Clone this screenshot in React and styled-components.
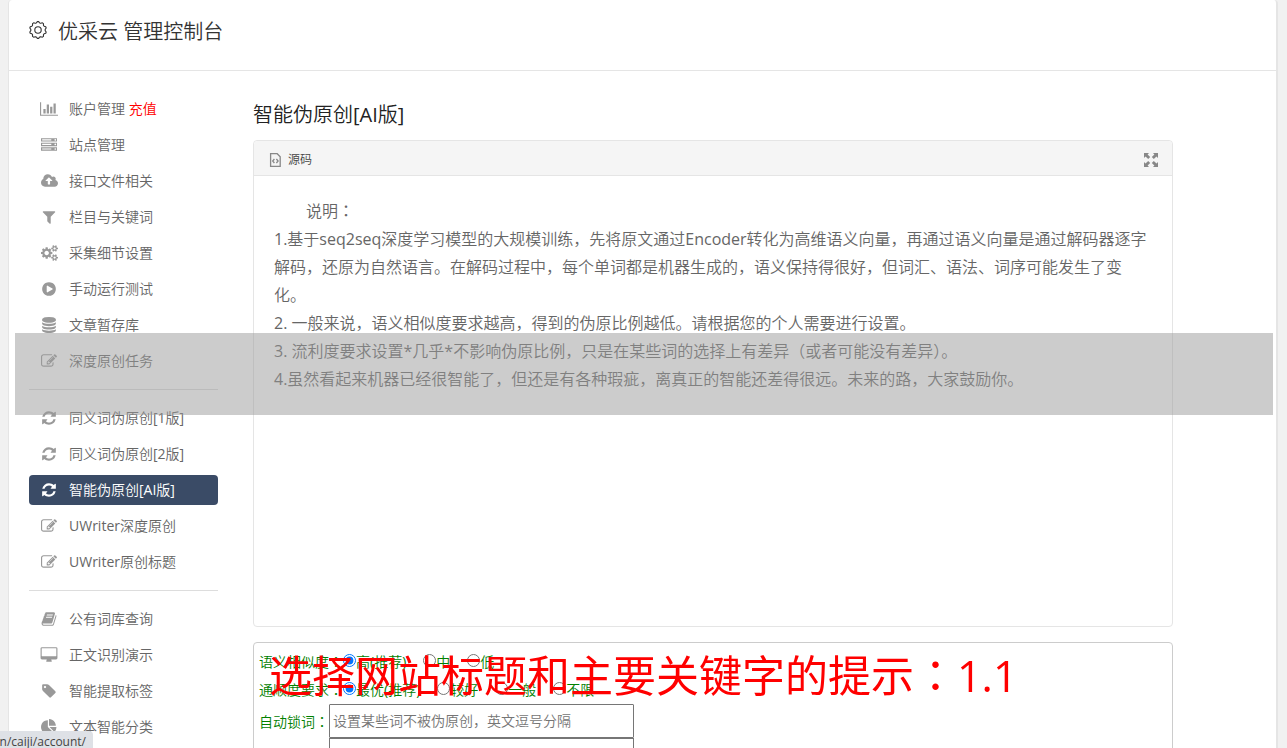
import React from "react";
import styled, { createGlobalStyle } from "styled-components";

const FONT = `"Open Sans", "Noto Sans CJK SC DemiLight", "Noto Sans CJK SC", sans-serif`;

const GlobalStyle = createGlobalStyle`
  *, *::before, *::after { box-sizing: border-box; }
  body {
    margin: 0;
    background: #f1f1f1;
    font-family: ${FONT};
    font-size: 14px;
    font-weight: 400;
    color: #666;
  }
  button, input, textarea { font: inherit; }
`;

const Page = styled.div`
  height: 100vh;
  overflow: hidden;
  padding: 0 9px 0 8px;
`;

const Card = styled.div`
  min-height: 100vh;
  background: #fff;
  border-left: 1px solid #e5e5e5;
  border-right: 2px solid #e5e5e5;
  border-radius: 4px 4px 0 0;
`;

const Header = styled.header`
  display: flex;
  align-items: center;
  gap: 11px;
  height: 71px;
  padding: 0 20px 10px;
  border-bottom: 1px solid #e5e5e5;
  color: #333;
`;

const HeaderTitle = styled.h1`
  margin: 0;
  padding-top: 3px;
  font-size: 20px;
  line-height: 28px;
  font-weight: 400;
`;

const Columns = styled.div`
  display: flex;
  align-items: flex-start;
  gap: 35px;
  padding: 23px 103px 0 20px;
`;

const Sidebar = styled.nav`
  display: flex;
  flex-direction: column;
  flex: none;
  gap: 6px;
  width: 189px;
`;

const NavItem = styled.a`
  display: flex;
  align-items: center;
  gap: 10px;
  height: 30px;
  padding: 0 10px;
  border-radius: 4px;
  line-height: 20px;
  text-decoration: none;
  white-space: pre;
  color: ${(p) => (p.$active ? "#fff" : "#666")};
  background: ${(p) => (p.$active ? "#3a4b66" : "transparent")};
`;

const NavIcon = styled.span`
  display: flex;
  justify-content: center;
  flex: none;
  width: 20px;
  color: ${(p) => (p.$active ? "#fff" : "#999")};
`;

const Recharge = styled.span`
  color: #f00;
`;

const Divider = styled.hr`
  width: 100%;
  margin: 7px 0;
  border: 0;
  border-top: 1px solid #ddd;
`;

const Main = styled.main`
  flex: 1;
  min-width: 0;
`;

const Title = styled.h2`
  margin: 6px 0 10px;
  font-size: 20px;
  line-height: 30px;
  font-weight: 400;
  color: #222;
`;

const Panel = styled.section`
  min-height: 487px;
  border: 1px solid #e5e5e5;
  border-radius: 4px;
`;

const PanelHead = styled.div`
  display: flex;
  align-items: center;
  justify-content: space-between;
  height: 35px;
  padding: 3px 14px 0 15px;
  background: #f5f5f5;
  border-bottom: 1px solid #e5e5e5;
  border-radius: 4px 4px 0 0;
`;

const ToolButton = styled.button`
  display: flex;
  align-items: center;
  gap: 6px;
  padding: 0;
  border: 0;
  background: none;
  color: #444;
  font-size: 12px;
  line-height: 16px;
  cursor: pointer;
`;

const Article = styled.div`
  padding: 20px;
  font-size: 16px;
  line-height: 28px;
`;

const Paragraph = styled.p`
  margin: 0;
  text-indent: ${(p) => (p.$indent ? "2em" : "0")};
`;

const Form = styled.form`
  margin-top: 15px;
  min-height: 180px;
  padding: 4px 5px;
  border: 1px solid #ccc;
  border-radius: 4px;
  color: #008000;
`;

const RadioRow = styled.fieldset`
  display: flex;
  align-items: center;
  height: 28px;
  margin: 0;
  padding: 0;
  border: 0;
`;

const RowCaption = styled.span`
  flex: none;
`;

const Options = styled.div`
  display: flex;
  gap: 17px;
`;

const Option = styled.label`
  display: flex;
  align-items: center;
`;

const Radio = styled.input`
  width: 13px;
  height: 13px;
  margin: 0 0 2px;
`;

const FieldRow = styled.div`
  display: flex;
  align-items: center;
  margin-top: 1px;
`;

const FieldLabel = styled.label`
  flex: none;
  width: 70px;
`;

const TextInput = styled.input`
  width: 305px;
  height: 34px;
  padding: 0 3px 2px;
  border: 1px solid #767676;
  border-radius: 1px;
  outline: 0;
  &::placeholder { color: #757575; opacity: 1; }
`;

const TextArea = styled.textarea`
  width: 305px;
  height: 100px;
  margin-left: 70px;
  border: 1px solid #767676;
  resize: none;
`;

const GreyBand = styled.div`
  position: fixed;
  top: 333px;
  left: 15px;
  right: 14px;
  height: 82px;
  background: rgba(153, 153, 153, 0.5);
  pointer-events: none;
`;

const Caption = styled.div`
  position: fixed;
  left: 269px;
  top: 643px;
  font-family: "Open Sans", "Noto Sans CJK SC", sans-serif;
  font-size: 43px;
  line-height: 60px;
  color: #f00;
  white-space: nowrap;
  pointer-events: none;
`;

const CenteredMark = styled.span`
  font-family: "Noto Sans CJK JP", sans-serif;
`;

const StatusBar = styled.div`
  position: fixed;
  left: 0;
  bottom: 0;
  display: flex;
  justify-content: flex-end;
  width: 93px;
  height: 17px;
  padding: 3px 7px 0 0;
  overflow: hidden;
  background: #dee1e6;
  border-radius: 0 4px 0 0;
  font-size: 12px;
  line-height: 16px;
  color: #444;
  white-space: nowrap;
`;

const glyphs = {
  chart: [2048, "M640 896v512h-256v-512h256zm384-512v1024h-256v-1024h256zm1024 1152v128h-2048v-1536h128v1408h1920zm-640-896v768h-256v-768h256zm384-384v1152h-256v-1152h256z"],
  server: [1792, "M128 1408h1024v-128h-1024v128zm0-512h1024v-128h-1024v128zm1568 448q0-40-28-68t-68-28-68 28-28 68 28 68 68 28 68-28 28-68zm-1568-960h1024v-128h-1024v128zm1568 448q0-40-28-68t-68-28-68 28-28 68 28 68 68 28 68-28 28-68zm0-512q0-40-28-68t-68-28-68 28-28 68 28 68 68 28 68-28 28-68zm96 832v384h-1792v-384h1792zm0-512v384h-1792v-384h1792zm0-512v384h-1792v-384h1792z"],
  upload: [1920, "M1280 864q0-14-9-23l-352-352q-9-9-23-9t-23 9l-351 351q-10 12-10 24 0 14 9 23t23 9h224v352q0 13 9.5 22.5t22.5 9.5h192q13 0 22.5-9.5t9.5-22.5v-352h224q13 0 22.5-9.5t9.5-22.5zm640 288q0 159-112.5 271.5t-271.5 112.5h-1088q-185 0-316.5-131.5t-131.5-316.5q0-130 70-240t188-165q-2-30-2-43 0-212 150-362t362-150q156 0 285.5 87t188.5 231q71-62 166-62 106 0 181 75t75 181q0 76-41 138 130 31 213.5 135.5t83.5 238.5z"],
  filter: [1792, "M1595 295q17 41-14 70l-493 493v742q0 42-39 59-13 5-25 5-27 0-45-19l-256-256q-19-19-19-45v-486l-493-493q-31-29-14-70 17-39 59-39h1280q42 0 59 39z"],
  cogs: [1920, "M896 896q0-106-75-181t-181-75-181 75-75 181 75 181 181 75 181-75 75-181zm768 512q0-52-38-90t-90-38-90 38-38 90q0 53 37.5 90.5t90.5 37.5 90.5-37.5 37.5-90.5zm0-1024q0-52-38-90t-90-38-90 38-38 90q0 53 37.5 90.5t90.5 37.5 90.5-37.5 37.5-90.5zm-384 421v185q0 10-7 19.5t-16 10.5l-155 24q-11 35-32 76 34 48 90 115 7 11 7 20 0 12-7 19-23 30-82.5 89.5t-78.5 59.5q-11 0-21-7l-115-90q-37 19-77 31-11 108-23 155-7 24-30 24h-186q-11 0-20-7.5t-10-17.5l-23-153q-34-10-75-31l-118 89q-7 7-20 7-11 0-21-8-144-133-144-160 0-9 7-19 10-14 41-53t47-61q-23-44-35-82l-152-24q-10-1-17-9.5t-7-19.5v-185q0-10 7-19.5t16-10.5l155-24q11-35 32-76-34-48-90-115-7-11-7-20 0-12 7-20 22-30 82-89t79-59q11 0 21 7l115 90q34-18 77-32 11-108 23-154 7-24 30-24h186q11 0 20 7.5t10 17.5l23 153q34 10 75 31l118-89q8-7 20-7 11 0 21 8 144 133 144 160 0 8-7 19-12 16-42 54t-45 60q23 48 34 82l152 23q10 2 17 10.5t7 19.5zm640 533v140q0 16-149 31-12 27-30 52 51 113 51 138 0 4-4 7-122 71-124 71-8 0-46-47t-52-68q-20 2-30 2t-30-2q-14 21-52 68t-46 47q-2 0-124-71-4-3-4-7 0-25 51-138-18-25-30-52-149-15-149-31v-140q0-16 149-31 13-29 30-52-51-113-51-138 0-4 4-7 4-2 35-20t59-34 30-16q8 0 46 46.5t52 67.5q20-2 30-2t30 2q51-71 92-112l6-2q4 0 124 70 4 3 4 7 0 25-51 138 17 23 30 52 149 15 149 31zm0-1024v140q0 16-149 31-12 27-30 52 51 113 51 138 0 4-4 7-122 71-124 71-8 0-46-47t-52-68q-20 2-30 2t-30-2q-14 21-52 68t-46 47q-2 0-124-71-4-3-4-7 0-25 51-138-18-25-30-52-149-15-149-31v-140q0-16 149-31 13-29 30-52-51-113-51-138 0-4 4-7 4-2 35-20t59-34 30-16q8 0 46 46.5t52 67.5q20-2 30-2t30 2q51-71 92-112l6-2q4 0 124 70 4 3 4 7 0 25-51 138 17 23 30 52 149 15 149 31z"],
  play: [1792, "M896 128q209 0 385.5 103t279.5 279.5 103 385.5-103 385.5-279.5 279.5-385.5 103-385.5-103-279.5-279.5-103-385.5 103-385.5 279.5-279.5 385.5-103zm384 823q32-18 32-55t-32-55l-544-320q-31-19-64-1-32 19-32 56v640q0 37 32 56 16 8 32 8 17 0 32-9z"],
  database: [1792, "M896 768q237 0 443-43t325-127v170q0 69-103 128t-280 93.5-385 34.5-385-34.5-280-93.5-103-128v-170q119 84 325 127t443 43zm0 768q237 0 443-43t325-127v170q0 69-103 128t-280 93.5-385 34.5-385-34.5-280-93.5-103-128v-170q119 84 325 127t443 43zm0-384q237 0 443-43t325-127v170q0 69-103 128t-280 93.5-385 34.5-385-34.5-280-93.5-103-128v-170q119 84 325 127t443 43zm0-1152q208 0 385 34.5t280 93.5 103 128v128q0 69-103 128t-280 93.5-385 34.5-385-34.5-280-93.5-103-128v-128q0-69 103-128t280-93.5 385-34.5z"],
  edit: [1792, "M888 1184l116-116-152-152-116 116v56h96v96h56zm440-720q-16-16-33 1l-350 350q-17 17-1 33t33-1l350-350q17-17 1-33zm80 594v190q0 119-84.5 203.5t-203.5 84.5h-832q-119 0-203.5-84.5t-84.5-203.5v-832q0-119 84.5-203.5t203.5-84.5h832q63 0 117 25 15 7 18 23 3 17-9 29l-49 49q-14 14-32 8-23-6-45-6h-832q-66 0-113 47t-47 113v832q0 66 47 113t113 47h832q66 0 113-47t47-113v-126q0-13 9-22l64-64q15-15 35-7t20 29zm-96-738l288 288-672 672h-288v-288zm444 132l-92 92-288-288 92-92q28-28 68-28t68 28l152 152q28 28 28 68t-28 68z"],
  refresh: [1792, "M1639 1056q0 5-1 7-64 268-268 434.5t-478 166.5q-146 0-282.5-55t-243.5-157l-129 129q-19 19-45 19t-45-19-19-45v-448q0-26 19-45t45-19h448q26 0 45 19t19 45-19 45l-137 137q71 66 161 102t187 36q134 0 250-65t186-179q11-17 53-117 8-23 30-23h192q13 0 22.5 9.5t9.5 22.5zm25-800v448q0 26-19 45t-45 19h-448q-26 0-45-19t-19-45 19-45l138-138q-148-137-349-137-134 0-250 65t-186 179q-11 17-53 117-8 23-30 23h-199q-13 0-22.5-9.5t-9.5-22.5v-7q65-268 270-434.5t480-166.5q146 0 284 55.5t245 156.5l130-129q19-19 45-19t45 19 19 45z"],
  book: [1792, "M1703 478q40 57 18 129l-275 906q-19 64-76.5 107.5t-122.5 43.5h-923q-77 0-148.5-53.5t-99.5-131.5q-24-67-2-127 0-4 3-27t4-37q1-8-3-21.5t-3-19.5q2-11 8-21t16.5-23.5 16.5-23.5q23-38 45-91.5t30-91.5q3-10 .5-30t-.5-28q3-11 17-28t17-23q21-36 42-92t25-90q1-9-2.5-32t.5-28q4-13 22-30.5t22-22.5q19-26 42.5-84.5t27.5-96.5q1-8-3-25.5t-2-26.5q2-8 9-18t18-23 17-21q8-12 16.5-30.5t15-35 16-36 19.5-32 26.5-23.5 36-11.5 47.5 5.5l-1 3q38-9 51-9h761q74 0 114 56t18 130l-274 906q-36 119-71.5 153.5t-128.5 34.5h-869q-27 0-38 15-11 16-1 43 24 70 144 70h923q29 0 56-15.5t35-41.5l300-987q7-22 5-57 38 15 59 43zm-1064 2q-4 13 2 22.5t20 9.5h608q13 0 25.5-9.5t16.5-22.5l21-64q4-13-2-22.5t-20-9.5h-608q-13 0-25.5 9.5t-16.5 22.5zm-83 256q-4 13 2 22.5t20 9.5h608q13 0 25.5-9.5t16.5-22.5l21-64q4-13-2-22.5t-20-9.5h-608q-13 0-25.5 9.5t-16.5 22.5z"],
  desktop: [2048, "M1856 992v-832q0-13-9.5-22.5t-22.5-9.5h-1600q-13 0-22.5 9.5t-9.5 22.5v832q0 13 9.5 22.5t22.5 9.5h1600q13 0 22.5-9.5t9.5-22.5zm128-832v1088q0 66-47 113t-113 47h-544q0 37 16 77.5t32 71 16 43.5q0 26-19 45t-45 19h-512q-26 0-45-19t-19-45q0-14 16-44t32-70 16-78h-544q-66 0-113-47t-47-113v-1088q0-66 47-113t113-47h1600q66 0 113 47t47 113z"],
  tag: [1792, "M576 448q0-53-37.5-90.5t-90.5-37.5-90.5 37.5-37.5 90.5 37.5 90.5 90.5 37.5 90.5-37.5 37.5-90.5zm1067 576q0 53-37 90l-491 492q-39 37-91 37-53 0-90-37l-715-716q-38-37-64.5-101t-26.5-117v-416q0-52 38-90t90-38h416q53 0 117 26.5t102 64.5l715 714q37 39 37 91z"],
  pie: [1792, "M768 890l546 546q-106 108-247.5 168t-298.5 60q-209 0-385.5-103t-279.5-279.5-103-385.5 103-385.5 279.5-279.5 385.5-103v762zm187 6h773q0 157-60 298.5t-168 247.5zm709-128h-768v-768q209 0 385.5 103t279.5 279.5 103 385.5z"],
};

function Glyph({ name }) {
  const [width, d] = glyphs[name];
  return (
    <svg width={Math.round(width / 112)} height="16" viewBox={`0 0 ${width} 1792`} fill="currentColor" fillRule="evenodd" aria-hidden="true">
      <path d={d} />
    </svg>
  );
}

const TEETH = 10;
const gearOutline = Array.from({ length: TEETH * 4 }, (_, i) => {
  const radius = i % 4 < 2 ? 8.4 : 7.2;
  const angle = ((i - 0.5) / (TEETH * 4)) * Math.PI * 2 - Math.PI / 2;
  return `${(9 + radius * Math.cos(angle)).toFixed(2)},${(9 + radius * Math.sin(angle)).toFixed(2)}`;
}).join(" ");

function GearIcon() {
  return (
    <svg width="18" height="18" viewBox="0 0 18 18" fill="none" stroke="#333" strokeWidth="1.1" strokeLinejoin="round" aria-hidden="true">
      <polygon points={gearOutline} />
      <circle cx="9" cy="9" r="3.2" />
    </svg>
  );
}

function SourceIcon() {
  return (
    <svg width="13" height="14" viewBox="0 0 13 14" fill="none" stroke="#888" strokeWidth="1.3" aria-hidden="true">
      <path d="M1.6 .7h6.6l3 3v9.6H1.6z" />
      <path d="M5.4 6L3.7 8l1.7 2M7.4 6l1.7 2-1.7 2" />
    </svg>
  );
}

function ExpandIcon() {
  return (
    <svg width="14" height="14" viewBox="0 0 14 14" aria-hidden="true">
      <path fill="#888" d="M0 0h5L3.6 1.4 6.2 4 4.2 6 1.5 3.4 0 5zM14 0v5l-1.5-1.6L9.8 6l-2-2 2.6-2.6L9 0zM0 14V9l1.5 1.6L4.2 8l2 2-2.6 2.6L5 14zM14 14H9l1.4-1.4L7.8 10l2-2 2.7 2.6L14 9z" />
    </svg>
  );
}

const navGroups = [
  [
    ["chart", "账户管理", "充值"],
    ["server", "站点管理"],
    ["upload", "接口文件相关"],
    ["filter", "栏目与关键词"],
    ["cogs", "采集细节设置"],
    ["play", "手动运行测试"],
    ["database", "文章暂存库"],
    ["edit", "深度原创任务"],
  ],
  [
    ["refresh", "同义词伪原创[1版]"],
    ["refresh", "同义词伪原创[2版]"],
    ["refresh", "智能伪原创[AI版]"],
    ["edit", "UWriter深度原创"],
    ["edit", "UWriter原创标题"],
  ],
  [
    ["book", "公有词库查询"],
    ["desktop", "正文识别演示"],
    ["tag", "智能提取标签"],
    ["pie", "文本智能分类"],
  ],
];

const ACTIVE = "智能伪原创[AI版]";

const notes = [
  "1.基于seq2seq深度学习模型的大规模训练，先将原文通过Encoder转化为高维语义向量，再通过语义向量是通过解码器逐字解码，还原为自然语言。在解码过程中，每个单词都是机器生成的，语义保持得很好，但词汇、语法、词序可能发生了变化。",
  "2. 一般来说，语义相似度要求越高，得到的伪原比例越低。请根据您的个人需要进行设置。",
  "3. 流利度要求设置*几乎*不影响伪原比例，只是在某些词的选择上有差异（或者可能没有差异）。",
  "4.虽然看起来机器已经很智能了，但还是有各种瑕疵，离真正的智能还差得很远。未来的路，大家鼓励你。",
];

function Colon() {
  return <CenteredMark>：</CenteredMark>;
}

function RadioGroup({ name, caption, options }) {
  return (
    <RadioRow aria-label={caption}>
      <RowCaption>
        {caption}
        <Colon />
      </RowCaption>
      <Options>
        {options.map((text, i) => (
          <Option key={text}>
            <Radio type="radio" name={name} defaultChecked={i === 0} />
            {text}
          </Option>
        ))}
      </Options>
    </RadioRow>
  );
}

export default function App() {
  return (
    <Page>
      <GlobalStyle />
      <Card>
        <Header>
          <GearIcon />
          <HeaderTitle>优采云 管理控制台</HeaderTitle>
        </Header>
        <Columns>
          <Sidebar>
            {navGroups.map((group, g) => (
              <React.Fragment key={g}>
                {g > 0 && <Divider />}
                {group.map(([icon, text, extra]) => (
                  <NavItem key={text} href="#" $active={text === ACTIVE}>
                    <NavIcon $active={text === ACTIVE}>
                      <Glyph name={icon} />
                    </NavIcon>
                    <span>
                      {text}
                      {extra && <Recharge> {extra}</Recharge>}
                    </span>
                  </NavItem>
                ))}
              </React.Fragment>
            ))}
          </Sidebar>
          <Main>
            <Title>智能伪原创[AI版]</Title>
            <Panel>
              <PanelHead>
                <ToolButton type="button">
                  <SourceIcon />
                  源码
                </ToolButton>
                <ToolButton type="button" aria-label="全屏">
                  <ExpandIcon />
                </ToolButton>
              </PanelHead>
              <Article>
                <Paragraph $indent>
                  说明
                  <Colon />
                </Paragraph>
                {notes.map((text) => (
                  <Paragraph key={text}>{text}</Paragraph>
                ))}
              </Article>
            </Panel>
            <Form>
              <RadioGroup name="similarity" caption="语义相似度" options={["高(推荐)", "中", "低"]} />
              <RadioGroup name="fluency" caption="通顺度要求" options={["最优(推荐)", "较好", "一般", "不限"]} />
              <FieldRow>
                <FieldLabel htmlFor="locked">
                  自动锁词
                  <Colon />
                </FieldLabel>
                <TextInput id="locked" type="text" placeholder="设置某些词不被伪原创，英文逗号分隔" />
              </FieldRow>
              <TextArea aria-label="原文" />
            </Form>
          </Main>
        </Columns>
      </Card>
      <GreyBand />
      <Caption>
        选择网站标题和主要关键字的提示
        <Colon />
        1.1
      </Caption>
      <StatusBar>n/caiji/account/</StatusBar>
    </Page>
  );
}
